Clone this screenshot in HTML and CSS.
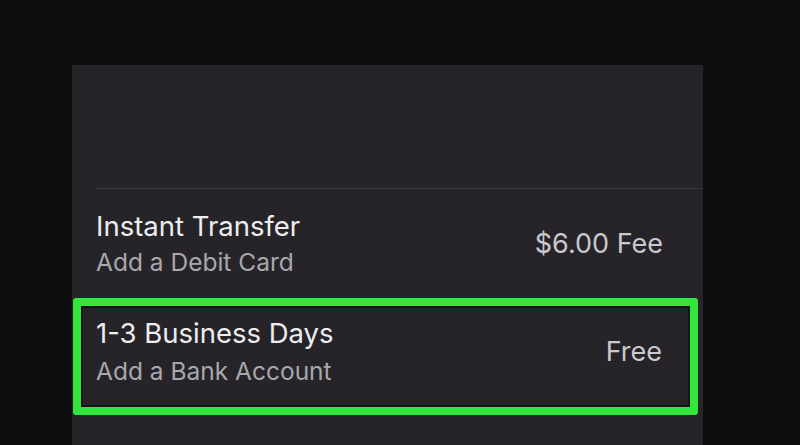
FILE: index.html
```html
<!DOCTYPE html>
<html>
<head>
<meta charset="utf-8">
<link rel="stylesheet" href="styles.css">
</head>
<body>
<div class="panel">
  <div class="header"></div>
  <div class="divider"></div>
  <div class="row">
    <div class="texts">
      <div class="title">Instant Transfer</div>
      <div class="sub">Add a Debit Card</div>
    </div>
    <div class="fee">$6.00 Fee</div>
  </div>
  <div class="row selected">
    <div class="texts">
      <div class="title">1-3 Business Days</div>
      <div class="sub">Add a Bank Account</div>
    </div>
    <div class="fee">Free</div>
  </div>
</div>
</body>
</html>
```
FILE: styles.css
```css
html, body {
  margin: 0;
  padding: 0;
  background: #0e0e0f;
  height: 445px;
  overflow: hidden;
  font-family: Inter, "Liberation Sans", sans-serif;
}
.panel {
  margin-left: 72px;
  margin-top: 65px;
  width: 631px;
  height: 380px;
  background: #262429;
  display: flex;
  flex-direction: column;
}
.header {
  height: 123px;
  flex-shrink: 0;
}
.divider {
  height: 1px;
  flex-shrink: 0;
  margin-left: 24px;
  background: #3a383e;
}
.row {
  display: flex;
  align-items: center;
  justify-content: space-between;
  padding: 0 40px 0 24px;
  height: 109px;
  flex-shrink: 0;
  box-sizing: border-box;
}
.texts {
  display: flex;
  flex-direction: column;
  gap: 5px;
}
.title {
  color: #ededee;
  font-size: 27.5px;
  line-height: 32px;
}
.sub {
  color: #a8a7ac;
  font-size: 24.5px;
  line-height: 30px;
}
.fee {
  color: #c9c8cc;
  font-size: 27px;
}
.selected {
  margin: 0 5px 0 1px;
  height: 117px;
  padding: 0 28px 10px 15px;
  border: 8px solid #34e53c;
  border-radius: 3px;
  box-shadow: inset 0 0 0 2px #141315;
}
.selected .texts {
  gap: 7px;
}
```
